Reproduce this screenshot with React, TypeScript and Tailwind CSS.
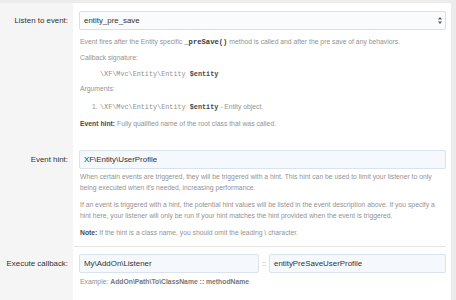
import React from "react";

const font = { fontFamily: '"Liberation Sans", Arial, sans-serif' };

function Code({ children, bold }: { children: React.ReactNode; bold?: boolean }) {
  return (
    <span
      className={`font-['Liberation_Mono',monospace] text-[6.8px] ${bold ? "font-bold text-[#4a4a4a]" : "text-[#8f8f8f]"}`}
    >
      {children}
    </span>
  );
}

function Row({
  label,
  top,
  children,
}: {
  label: string;
  top: string;
  children: React.ReactNode;
}) {
  return (
    <div className="flex">
      <div className={`w-[73px] shrink-0 bg-[#f5f5f5] ${top}`}>
        <div className="flex h-[19px] items-center justify-end pr-[5px] text-[7.9px] text-[#333]">
          {label}
        </div>
      </div>
      <div className={`flex-1 pl-[6px] pr-[5px] ${top}`}>{children}</div>
    </div>
  );
}

const inputCls =
  "flex h-[19px] items-center rounded-[2px] border border-[#dae3ec] bg-[#f5f9fd] pl-[4px] text-[7.9px] text-[#333]";

export default function App() {
  return (
    <div style={font} className="h-[300px] w-[456px] overflow-hidden bg-[#ececec] pt-[3px] pr-[5px]">
      <div className="flex h-[297px] flex-col bg-white text-[6.8px] leading-[11px] text-[#939393]">
        <Row label="Listen to event:" top="pt-[8px]">
          <div className="flex h-[19px] items-center justify-between rounded-[2px] border border-[#dcdfe3] bg-[#fafbfc] pl-[4px] pr-[3px] text-[7.9px] text-[#333]">
            <span>entity_pre_save</span>
            <svg width="4" height="7" viewBox="0 0 4 7">
              <path d="M2 0 L4 2.6 L0 2.6 Z" fill="#555" />
              <path d="M2 7 L4 4.4 L0 4.4 Z" fill="#555" />
            </svg>
          </div>
          <p className="mt-[6px] pl-[1px]">
            Event fires after the Entity specific{" "}
            <span className="font-['Liberation_Mono',monospace] text-[7.2px] font-bold text-[#3a3a3a]">_preSave()</span>{" "}
            method is called and after the pre save of any behaviors.
          </p>
          <p className="mt-[4px] pl-[1px]">Callback signature:</p>
          <div className="mt-[5px] h-[11px] pl-[21px]">
            <Code>\XF\Mvc\Entity\Entity </Code>
            <Code bold>$entity</Code>
          </div>
          <p className="mt-[4px] pl-[1px]">Arguments:</p>
          <div className="mt-[7px] flex h-[11px] pl-[13px]">
            <span className="w-[8px]">1.</span>
            <span>
              <Code>\XF\Mvc\Entity\Entity </Code>
              <Code bold>$entity</Code> - Entity object.
            </span>
          </div>
          <p className="mt-[6px] pl-[1px]">
            <span className="font-bold text-[#4a4a4a]">Event hint:</span> Fully qualified name of the root class that was called.
          </p>
        </Row>

        <Row label="Event hint:" top="pt-[21px]">
          <div className={inputCls}>XF\Entity\UserProfile</div>
          <p className="mt-[2px] pl-[1px]">
            When certain events are triggered, they will be triggered with a hint. This hint can be used to limit your listener to only being executed when it's needed, increasing performance.
          </p>
          <p className="mt-[6px] pl-[1px]">
            If an event is triggered with a hint, the potential hint values will be listed in the event description above. If you specify a hint here, your listener will only be run if your hint matches the hint provided when the event is triggered.
          </p>
          <p className="mt-[6px] pl-[1px]">
            <span className="font-bold text-[#4a4a4a]">Note:</span> If the hint is a class name, you should omit the leading \ character.
          </p>
          <div className="-ml-[5px] mt-[8px] h-px bg-[#e4e4e4]" />
        </Row>

        <Row label="Execute callback:" top="pt-[7px]">
          <div className="flex items-center">
            <div className={`${inputCls} w-[180px]`}>My\AddOn\Listener</div>
            <span className="w-[10px] text-center text-[7.5px] text-[#939393]">::</span>
            <div className={`${inputCls} flex-1`}>entityPreSaveUserProfile</div>
          </div>
          <p className="mt-[3px] pl-[1px]">
            Example: <span className="font-bold text-[#777]">AddOn\Path\To\ClassName :: methodName</span>
          </p>
        </Row>
        <div className="flex flex-1">
          <div className="w-[73px] bg-[#f5f5f5]" />
        </div>
      </div>
    </div>
  );
}
